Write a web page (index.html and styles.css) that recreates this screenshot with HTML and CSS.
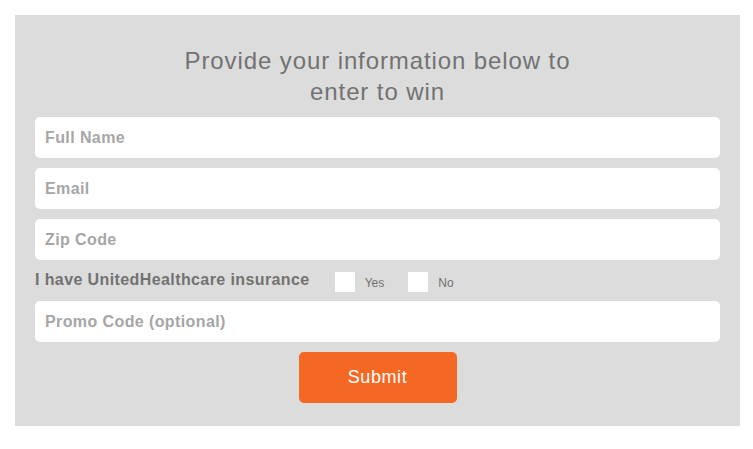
FILE: index.html
```html
<!DOCTYPE html>
<html lang="en">
<head>
<meta charset="utf-8">
<title>Enter to win</title>
<link rel="stylesheet" href="styles.css">
</head>
<body>
<form class="panel">
  <h2 class="title">Provide your information below to<br>enter to win</h2>
  <input class="field" type="text" placeholder="Full Name">
  <input class="field" type="email" placeholder="Email">
  <input class="field" type="text" placeholder="Zip Code">
  <div class="check-row">
    <span class="question">I have UnitedHealthcare insurance</span>
    <label class="opt"><span class="box"></span><span class="opt-text">Yes</span></label>
    <label class="opt"><span class="box"></span><span class="opt-text">No</span></label>
  </div>
  <input class="field" type="text" placeholder="Promo Code (optional)">
  <div class="actions">
    <button class="submit" type="button">Submit</button>
  </div>
</form>
</body>
</html>
```
FILE: styles.css
```css
html, body {
  margin: 0;
  padding: 0;
  background: #ffffff;
}
body {
  font-family: "Liberation Sans", Arial, sans-serif;
}
.panel {
  margin: 15px 0 0 15px;
  width: 725px;
  box-sizing: border-box;
  background: #dcdcdc;
  padding: 30px 20px 23px;
  display: flex;
  flex-direction: column;
  gap: 10px;
}
.title {
  margin: 0;
  text-align: center;
  font-size: 24px;
  line-height: 31px;
  font-weight: normal;
  letter-spacing: 0.9px;
  color: #727272;
}
.field {
  display: block;
  width: 100%;
  height: 41px;
  box-sizing: border-box;
  border: none;
  border-radius: 5px;
  background: #ffffff;
  padding: 0 10px;
  font-family: "Liberation Sans", Arial, sans-serif;
  font-size: 16px;
  font-weight: bold;
  letter-spacing: 0.4px;
  color: #555;
  outline: none;
}
.field::placeholder {
  color: #a6a6a6;
  opacity: 1;
}
.check-row {
  display: flex;
  align-items: center;
  height: 20px;
  margin: 2px 0 -1px;
}
.question {
  font-size: 16px;
  font-weight: bold;
  letter-spacing: 0.4px;
  color: #727272;
  margin-right: 25px;
  position: relative;
  top: -2px;
}
.opt {
  display: flex;
  align-items: center;
  margin-right: 24px;
}
.box {
  width: 20px;
  height: 20px;
  background: #ffffff;
}
.opt-text {
  margin-left: 10px;
  font-size: 12px;
  color: #707070;
  position: relative;
  top: 1px;
}
.actions {
  display: flex;
  justify-content: center;
}
.submit {
  width: 158px;
  height: 51px;
  border: none;
  border-radius: 5px;
  background: #f46824;
  color: #ffffff;
  font-family: "Liberation Sans", Arial, sans-serif;
  font-size: 18px;
  letter-spacing: 0.6px;
  padding: 0;
}
```
